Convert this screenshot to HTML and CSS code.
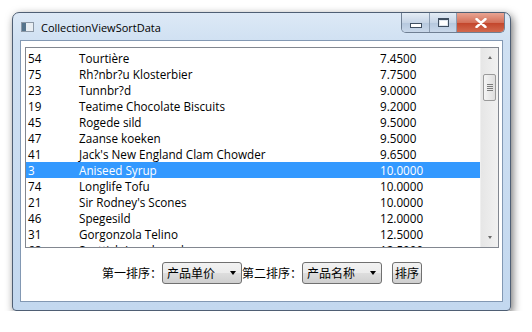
FILE: index.html
```html
<!DOCTYPE html>
<html>
<head>
<meta charset="UTF-8">
<title>CollectionViewSortData</title>
<link rel="stylesheet" href="styles.css">
</head>
<body>
	<div class="window">
		<div class="titlebar">
			<span class="appicon"><span class="appicon_side"></span></span>
			<span class="title">CollectionViewSortData</span>
			<div class="caption">
				<span class="cbtn cmin"><span class="glyph_min"></span></span>
				<span class="cbtn cmax"><span class="glyph_max"></span></span>
				<span class="cbtn cclose">
					<svg width="12" height="10" viewBox="0 0 12 10"><path d="M1.5 1 L10.5 9 M10.5 1 L1.5 9" stroke="#fff" stroke-width="2.4" stroke-linecap="round"/></svg>
				</span>
			</div>
		</div>
		<div class="client">
			<div class="listbox">
				<div class="rows">
					<div class="row"><span class="c_id">54</span><span class="c_name">Tourtière</span><span class="c_price">7.4500</span></div>
					<div class="row"><span class="c_id">75</span><span class="c_name">Rh?nbr?u Klosterbier</span><span class="c_price">7.7500</span></div>
					<div class="row"><span class="c_id">23</span><span class="c_name">Tunnbr?d</span><span class="c_price">9.0000</span></div>
					<div class="row"><span class="c_id">19</span><span class="c_name">Teatime Chocolate Biscuits</span><span class="c_price">9.2000</span></div>
					<div class="row"><span class="c_id">45</span><span class="c_name">Rogede sild</span><span class="c_price">9.5000</span></div>
					<div class="row"><span class="c_id">47</span><span class="c_name">Zaanse koeken</span><span class="c_price">9.5000</span></div>
					<div class="row"><span class="c_id">41</span><span class="c_name">Jack's New England Clam Chowder</span><span class="c_price">9.6500</span></div>
					<div class="row selected"><span class="c_id">3</span><span class="c_name">Aniseed Syrup</span><span class="c_price">10.0000</span></div>
					<div class="row"><span class="c_id">74</span><span class="c_name">Longlife Tofu</span><span class="c_price">10.0000</span></div>
					<div class="row"><span class="c_id">21</span><span class="c_name">Sir Rodney's Scones</span><span class="c_price">10.0000</span></div>
					<div class="row"><span class="c_id">46</span><span class="c_name">Spegesild</span><span class="c_price">12.0000</span></div>
					<div class="row"><span class="c_id">31</span><span class="c_name">Gorgonzola Telino</span><span class="c_price">12.5000</span></div>
					<div class="row"><span class="c_id">68</span><span class="c_name">Scottish Longbreads</span><span class="c_price">12.5000</span></div>
				</div>
				<div class="vscroll">
					<span class="arrow_up"></span>
					<div class="track">
						<div class="thumb"><span></span><span></span><span></span><span></span></div>
					</div>
					<span class="arrow_down"></span>
				</div>
			</div>
			<div class="toolbar">
				<span class="lbl">第一排序：</span>
				<span class="combo"><span class="combo_text">产品单价</span><span class="combo_arrow"></span></span>
				<span class="lbl">第二排序：</span>
				<span class="combo"><span class="combo_text">产品名称</span><span class="combo_arrow"></span></span>
				<span class="btn">排序</span>
			</div>
		</div>
	</div>
</body>
</html>
```

FILE: styles.css
```css
body{
	margin: 0px;
	background: #ffffff;
	font-family: "Open Sans", "Noto Sans", "Noto Sans CJK SC", sans-serif;
	font-size: 11.7px;
	color: #000000;
}
.window{
	margin: 12px 0px 0px 12px;
	width: 497px;
	height: 297px;
	border: 1px solid #4f5f74;
	border-radius: 7px 7px 4px 4px;
	background: linear-gradient(to bottom, #dde9f6 0px, #cfe0f2 30px, #c3d8ef 100%);
	box-shadow: 2px 3px 9px rgba(0,0,0,0.55);
	display: flex;
	flex-direction: column;
}
.titlebar{
	height: 27px;
	display: flex;
	align-items: flex-start;
}
.appicon{
	margin: 9px 0px 0px 8px;
	width: 11px;
	height: 8px;
	border: 1px solid #8c98a6;
	background: #e9eef3;
	display: flex;
}
.appicon_side{
	width: 4px;
	background: #56748c;
}
.title{
	margin: 7px 0px 0px 7px;
	font-family: "Open Sans", sans-serif;
	font-size: 11px;
	line-height: 16px;
	color: #000000;
}
.caption{
	margin-left: auto;
	margin-right: 5px;
	display: flex;
	height: 19px;
	border: 1px solid #6f7f93;
	border-top: none;
	border-radius: 0px 0px 5px 5px;
	overflow: hidden;
}
.cbtn{
	display: flex;
	align-items: center;
	justify-content: center;
	height: 19px;
}
.cmin{
	width: 27px;
	background: linear-gradient(to bottom, #e4ecf5 0%, #c7d5e6 50%, #b5c7dd 51%, #c9d8ea 100%);
	border-right: 1px solid #8a9bb0;
}
.cmax{
	width: 26px;
	background: linear-gradient(to bottom, #e4ecf5 0%, #c7d5e6 50%, #b5c7dd 51%, #c9d8ea 100%);
	border-right: 1px solid #8a9bb0;
}
.cclose{
	width: 47px;
	background: linear-gradient(to bottom, #e8a493 0%, #d4715a 50%, #c2442a 51%, #d2694e 100%);
}
.glyph_min{
	width: 10px;
	height: 3px;
	margin-top: 6px;
	border: 1px solid #3f4e60;
	background: #ffffff;
}
.glyph_max{
	width: 9px;
	height: 6px;
	border: 1px solid #3f4e60;
	border-top-width: 2px;
	background: #ffffff;
	box-shadow: inset 0px 0px 0px 1px #dfe6ee;
}
.client{
	margin: 0px 7px 8px 7px;
	flex: 1;
	background: #ffffff;
	border: 1px solid #8298b3;
	padding: 6px 3px 0px 4px;
	display: flex;
	flex-direction: column;
}
.listbox{
	height: 199px;
	border: 1px solid #828790;
	display: flex;
	overflow: hidden;
}
.rows{
	flex: 1;
	padding-top: 2px;
	overflow: hidden;
}
.row{
	height: 16px;
	line-height: 16px;
	display: flex;
	white-space: nowrap;
}
.row.selected{
	background: #3399ff;
	color: #ffffff;
}
.c_id{
	width: 51px;
	padding-left: 2px;
}
.c_name{
	width: 301px;
}
.c_price{
	flex: 1;
}
.vscroll{
	width: 17px;
	background: linear-gradient(to right, #e6e6e6, #f1f1f1);
	border-left: 1px solid #efefef;
	display: flex;
	flex-direction: column;
	align-items: center;
}
.arrow_up{
	margin-top: 8px;
	width: 0px;
	height: 0px;
	border-left: 2px solid transparent;
	border-right: 2px solid transparent;
	border-bottom: 3px solid #6b6b6b;
}
.track{
	flex: 1;
	width: 100%;
	padding-top: 15px;
	display: flex;
	flex-direction: column;
	align-items: center;
}
.thumb{
	width: 11px;
	height: 25px;
	border: 1px solid #9a9a9a;
	border-radius: 2px;
	background: linear-gradient(to right, #f5f5f5, #dedede);
	display: flex;
	flex-direction: column;
	align-items: center;
	justify-content: center;
	gap: 1px;
}
.thumb span{
	width: 6px;
	height: 1px;
	background: #7b7b7b;
}
.arrow_down{
	margin-bottom: 8px;
	width: 0px;
	height: 0px;
	border-left: 2px solid transparent;
	border-right: 2px solid transparent;
	border-top: 3px solid #6b6b6b;
}
.toolbar{
	margin-top: 14px;
	display: flex;
	justify-content: center;
	align-items: center;
	font-family: "Noto Sans CJK SC", sans-serif;
	font-size: 12px;
}
.lbl{
	line-height: 22px;
}
.combo{
	width: 78px;
	height: 20px;
	border: 1px solid #707070;
	border-radius: 3px;
	background: linear-gradient(to bottom, #f2f2f2 0%, #ebebeb 50%, #dddddd 51%, #cfcfcf 100%);
	display: flex;
	align-items: center;
}
.combo_text{
	flex: 1;
	padding-left: 4px;
	line-height: 20px;
}
.combo_arrow{
	margin-right: 5px;
	width: 0px;
	height: 0px;
	border-left: 3.5px solid transparent;
	border-right: 3.5px solid transparent;
	border-top: 4px solid #000000;
}
.btn{
	margin-left: 10px;
	width: 28px;
	height: 20px;
	line-height: 20px;
	text-align: center;
	border: 1px solid #707070;
	border-radius: 3px;
	background: linear-gradient(to bottom, #f2f2f2 0%, #ebebeb 50%, #dddddd 51%, #cfcfcf 100%);
}
```
